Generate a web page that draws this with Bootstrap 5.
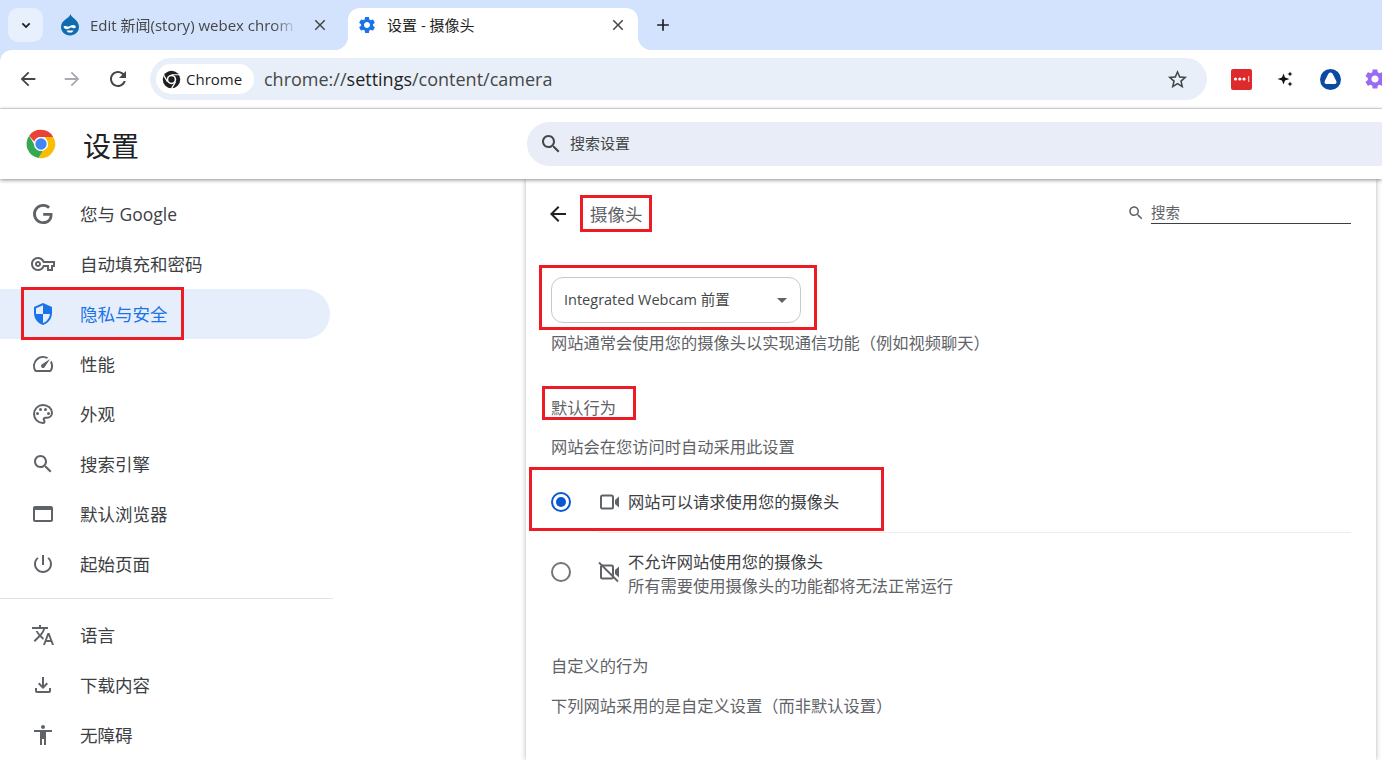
<!DOCTYPE html>
<html lang="zh-Hans">
<head>
  <meta charset="UTF-8" />
  <meta name="viewport" content="width=device-width, initial-scale=1.0" />
  <title>设置 - 摄像头</title>
  <link href="https://cdn.jsdelivr.net/npm/bootstrap@5.3.3/dist/css/bootstrap.min.css" rel="stylesheet" />
  <style>
    html, body { height: 760px; overflow: hidden; }
    body {
      font-family: "Open Sans", "Noto Sans CJK SC", sans-serif;
      background: #fff;
      color: #444746;
      position: relative;
    }
    svg { display: block; flex-shrink: 0; fill: currentColor; }

    .tabstrip { height: 50px; background: #d3e3fd; padding: 8px 0 0 8px; }
    .tab-menu { width: 35px; height: 34px; background: #e9f0fd; border-radius: 10px; color: #1f1f1f; flex-shrink: 0; }
    .tab-item { height: 42px; font-size: 15px; color: #444746; white-space: nowrap; padding-bottom: 8px; flex-shrink: 0; }
    .tab-off { width: 298px; padding-left: 17px; }
    .tab-off .tab-text { width: 208px; margin-left: 10px; -webkit-mask-image: linear-gradient(90deg, #000 88%, transparent); mask-image: linear-gradient(90deg, #000 88%, transparent); }
    .tab-off .tab-close { margin-right: 12px; }
    .tab-on { width: 290px; background: #fff; border-radius: 12px 12px 0 0; color: #1f1f1f; padding-left: 9px; margin-left: 7px; position: relative; }
    .tab-on .tab-text { width: 222px; margin-left: 10px; }
    .tab-on::before, .tab-on::after { content: ""; position: absolute; bottom: 0; width: 14px; height: 14px; }
    .tab-on::before { left: -14px; background: radial-gradient(circle at 0 0, #d3e3fd 14px, #fff 14.5px); }
    .tab-on::after { right: -14px; background: radial-gradient(circle at 100% 0, #d3e3fd 14px, #fff 14.5px); }
    .tab-close { color: #444746; }
    .tab-new { margin-left: 15px; color: #1f1f1f; height: 34px; }

    .toolbar-wrap { background: #d3e3fd; }
    .toolbar { height: 59px; background: #fff; border-bottom: 1px solid #e0e0e0; border-radius: 12px 0 0 0; padding-left: 17px; }
    .tool-btn { width: 44px; color: #444746; flex-shrink: 0; }
    .tool-btn.is-off { color: #a8abaf; }
    .tool-end { width: 45px; padding-left: 1px; }
    .omnibox { width: 1057px; height: 42px; flex-shrink: 0; background: #e9eff9; border-radius: 21px; padding: 0 18px 0 6px; }
    .chip { height: 30px; width: 98px; background: #fff; border-radius: 15px; font-size: 15px; color: #1f1f1f; padding-left: 6px; gap: 5px; }
    .url { font-size: 18px; color: #444746; margin-left: 10px; }
    .url b { font-weight: 400; color: #1f1f1f; }
    .ext-row { margin-left: 12px; flex-shrink: 0; }
    .ext-box { width: 44.500px; justify-content: center; }
    .ext-red { width: 21px; height: 21px; background: #dd2b2b; border-radius: 2px; }

    .set-head { height: 70px; background: #fff; box-shadow: 0 1px 4px rgba(0,0,0,.45); position: relative; z-index: 2; padding-left: 24px; }
    .set-title { font-size: 28px; color: #202124; margin-left: 25px; width: 444px; line-height: 1; padding-top: 3px; }
    .set-search { flex: 1; height: 44px; background: #e9edf7; border-radius: 22px 0 0 22px; color: #444746; padding-left: 12px; font-size: 15px; gap: 7px; }
    .set-search span { padding-bottom: 2px; }

    .set-body { height: 581px; overflow: hidden; }
    .side-nav { width: 526px; padding-top: 10px; flex-shrink: 0; }
    .side-row { height: 50px; width: 330px; padding-left: 31px; font-size: 17.5px; color: #3c4043; border-radius: 0 25px 25px 0; }
    .side-row svg { color: #5f6368; margin-right: 25px; }
    .side-row.is-on { background: #e6eefb; color: #1a73e8; }
    .side-row.is-on svg { color: #1a73e8; }
    .side-sep { width: 333px; height: 1px; background: #e3e3e3; margin: 9px 0 11px; }

    .panel { width: 850px; height: 100%; background: #fff; box-shadow: 0 0 5px rgba(0,0,0,.3); padding: 0 25px; color: #5f6368; font-size: 16.25px; flex-shrink: 0; }
    .panel-head { height: 70px; }
    .panel-back { color: #202124; margin-left: -5px; }
    .panel-title { font-size: 17.5px; margin-left: 20px; color: #5f6368; }
    .panel-find { margin-left: auto; margin-bottom: 4px; font-size: 14.5px; color: #5f6368; }
    .panel-find svg { margin-bottom: 2px; }
    .find-line { width: 200px; border-bottom: 1px solid #3c4043; line-height: 23px; margin-left: 6px; height: 23px; }
    .cam-select { width: 250px; height: 46px; margin-top: 28px; border: 1px solid #c8c8c8; border-radius: 12px; padding: 0 13px 0 12px; font-size: 14.5px; color: #444746; }
    .caret-down { width: 0; height: 0; border-left: 5px solid transparent; border-right: 5px solid transparent; border-top: 5px solid #5f6368; margin-left: auto; }
    .cam-note { margin-top: 8px; line-height: 24px; }
    .block-title { margin-top: 41px; line-height: 24px; }
    .block-title-low { margin-top: 44px; }
    .block-note { margin-top: 15px; line-height: 24px; }
    .block-note-low { margin-top: 16px; }
    .opt-row { height: 60px; }
    .opt-a { margin-top: 13px; }
    .opt-b { height: 78px; border-top: 1px solid #ececec; margin-left: 47px; }
    .opt-b-radio { margin-left: -47px; }
    .opt-radio { width: 20px; height: 20px; border-radius: 50%; border: 2px solid #757575; flex-shrink: 0; }
    .opt-radio.is-on { border-color: #0b57d0; padding: 3px; }
    .opt-radio.is-on i { display: block; width: 10px; height: 10px; border-radius: 50%; background: #0b57d0; }
    .opt-icon { margin-left: 27px; margin-right: 8px; color: #5f6368; }
    .opt-main { color: #3c4043; line-height: 24px; }
    .opt-sub { line-height: 24px; color: #5f6368; }
    .opt-lines { padding-top: 4px; }

    .mark-box { position: absolute; border: 3px solid #ed1c24; z-index: 5; pointer-events: none; }
  </style>
</head>
<body>
  <div class="tabstrip d-flex align-items-start">
    <div class="tab-menu d-flex align-items-center justify-content-center">
      <svg width="16" height="16" viewBox="0 0 24 24"><path d="M7.400 8.600 12 13.200l4.600-4.600L18.400 10.400 12 16.800 5.600 10.400z"/></svg>
    </div>
    <div class="tab-item tab-off d-flex align-items-center">
      <svg width="20" height="22" viewBox="0 0 20 22"><path fill="#0f6cb0" d="M10.500 0c.6 2.600 3 3.700 5 5.700 2 2 3.500 4.200 3.500 7.300 0 4.900-4 8.500-9 8.500s-9-3.700-9-8.500c0-3.700 2.300-6 4.700-7.700C7.200 4 9.800 2.800 10.500 0z"/><path fill="#fff" d="M4 12c2-.5 3.600 1.500 6 0 2-1.300 4-1.600 5.500 0 .8 1-.2 2.500-1.700 2.200-1.600-.3-2.800-1.200-3.800-.2-1.300 1.300-3.800 1.600-5.300.5C3.600 13.800 3.200 12.300 4 12z"/><path fill="#fff" d="M6.500 16.500h7l-1.500 2h-4z"/></svg>
      <div class="tab-text">Edit 新闻(story) webex chrom</div>
      <svg class="tab-close ms-auto" width="18" height="18" viewBox="0 0 24 24"><path d="M19 6.400 17.600 5 12 10.600 6.400 5 5 6.400 10.600 12 5 17.600 6.400 19 12 13.400 17.600 19 19 17.600 13.400 12z"/></svg>
    </div>
    <div class="tab-item tab-on d-flex align-items-center">
      <svg width="20" height="20" viewBox="0 0 24 24"><path fill="#1a73e8" d="M19.140 12.940c.04-.3.06-.61.06-.94 0-.32-.02-.64-.07-.94l2.030-1.580c.18-.14.23-.41.12-.61l-1.920-3.320c-.12-.22-.37-.29-.59-.22l-2.390.96c-.5-.38-1.030-.7-1.620-.94l-.36-2.540c-.04-.24-.24-.41-.48-.41h-3.840c-.24 0-.43.17-.47.41l-.36 2.540c-.59.24-1.130.57-1.620.94l-2.390-.96c-.22-.08-.47 0-.59.22L2.740 8.870c-.12.21-.08.47.12.61l2.030 1.580c-.05.3-.09.63-.09.94s.02.64.07.94l-2.030 1.580c-.18.14-.23.41-.12.61l1.920 3.320c.12.22.37.29.59.22l2.390-.96c.5.38 1.030.7 1.620.94l.36 2.540c.05.24.24.41.48.41h3.840c.24 0 .44-.17.47-.41l.36-2.540c.59-.24 1.130-.56 1.620-.94l2.390.96c.22.08.47 0 .59-.22l1.920-3.320c.12-.22.07-.47-.12-.61l-2.010-1.580zM12 15.600c-1.980 0-3.600-1.620-3.600-3.600s1.620-3.600 3.600-3.600 3.600 1.620 3.600 3.600-1.620 3.600-3.600 3.600z"/></svg>
      <div class="tab-text">设置 - 摄像头</div>
      <svg class="tab-close" width="18" height="18" viewBox="0 0 24 24"><path d="M19 6.400 17.600 5 12 10.600 6.400 5 5 6.400 10.600 12 5 17.600 6.400 19 12 13.400 17.600 19 19 17.600 13.400 12z"/></svg>
    </div>
    <div class="tab-new d-flex align-items-center">
      <svg width="20" height="20" viewBox="0 0 24 24"><path d="M19 13h-6v6h-2v-6H5v-2h6V5h2v6h6z"/></svg>
    </div>
  </div>

  <div class="toolbar-wrap">
    <div class="toolbar d-flex align-items-center">
      <div class="tool-btn"><svg width="22" height="22" viewBox="0 0 24 24"><path d="M20 11H7.830l5.590-5.590L12 4l-8 8 8 8 1.410-1.410L7.830 13H20v-2z"/></svg></div>
      <div class="tool-btn is-off"><svg width="22" height="22" viewBox="0 0 24 24"><path d="M4 11h12.170l-5.590-5.590L12 4l8 8-8 8-1.410-1.410L16.170 13H4v-2z"/></svg></div>
      <div class="tool-btn tool-end"><svg width="24" height="24" viewBox="0 0 24 24"><path d="M17.650 6.350C16.200 4.900 14.210 4 12 4c-4.420 0-7.990 3.580-7.990 8s3.570 8 7.990 8c3.730 0 6.840-2.550 7.730-6h-2.080c-.82 2.330-3.040 4-5.650 4-3.310 0-6-2.690-6-6s2.690-6 6-6c1.660 0 3.140.69 4.220 1.780L13 11h7V4l-2.350 2.350z"/></svg></div>
      <div class="omnibox d-flex align-items-center">
        <div class="chip d-flex align-items-center">
          <svg width="19" height="19" viewBox="0 0 24 24"><circle cx="12" cy="12" r="11" fill="#1f1f1f"/><circle cx="12" cy="12" r="6" fill="#fff"/><circle cx="12" cy="12" r="4" fill="#1f1f1f"/><path d="M12 6h10M7 15 2 6.500M17 15l-5 8.500" stroke="#fff" stroke-width="1.500" fill="none"/></svg>
          <span>Chrome</span>
        </div>
        <div class="url">chrome://<b>settings</b>/content/camera</div>
        <svg class="ms-auto" width="23" height="23" viewBox="0 0 24 24"><path d="M22 9.240l-7.190-.62L12 2 9.190 8.630 2 9.240l5.460 4.730L5.820 21 12 17.270 18.180 21l-1.630-7.030L22 9.240zM12 15.400l-3.760 2.270 1-4.280-3.320-2.880 4.380-.38L12 6.100l1.710 4.040 4.380.38-3.320 2.880 1 4.280L12 15.400z"/></svg>
      </div>
      <div class="ext-row d-flex align-items-center">
        <div class="ext-box d-flex">
          <div class="ext-red d-flex align-items-center justify-content-center">
            <svg width="17" height="6" viewBox="0 0 17 6"><circle cx="2.500" cy="3" r="1.600" fill="#fff"/><circle cx="6.800" cy="3" r="1.600" fill="#fff"/><circle cx="11" cy="3" r="1.600" fill="#fff"/><rect x="15" width="1.300" height="6" fill="#f4b5b5"/></svg>
          </div>
        </div>
        <div class="ext-box d-flex">
          <svg width="18" height="18" viewBox="0 0 18 18"><path fill="#111" d="M6.500 3.500 8 7.500 12.500 9 8 10.500 6.500 14.500 5 10.500 .5 9 5 7.500z"/><path fill="#111" d="M13 1.500l.8 1.700 1.700.8-1.700.8-.8 1.700-.8-1.700-1.700-.8 1.700-.8zM13 11.500l.8 1.700 1.700.8-1.700.8-.8 1.700-.8-1.700-1.700-.8 1.700-.8z"/></svg>
        </div>
        <div class="ext-box d-flex">
          <svg width="21" height="21" viewBox="0 0 21 21"><circle cx="10.500" cy="10.500" r="10.500" fill="#0b4aa2"/><path d="M10.500 3.500c1.500 0 2 1 3 3l2.500 5c1 2 .5 3.500-1.500 3.500h-8c-2 0-2.500-1.500-1.500-3.500l2.500-5c1-2 1.500-3 3-3z" fill="#fff"/></svg>
        </div>
        <div class="ext-box d-flex">
          <svg width="24" height="24" viewBox="0 0 24 24"><path fill="#9a6bf0" d="M19.140 12.940c.04-.3.06-.61.06-.94 0-.32-.02-.64-.07-.94l2.030-1.580c.18-.14.23-.41.12-.61l-1.920-3.320c-.12-.22-.37-.29-.59-.22l-2.390.96c-.5-.38-1.030-.7-1.620-.94l-.36-2.540c-.04-.24-.24-.41-.48-.41h-3.840c-.24 0-.43.17-.47.41l-.36 2.540c-.59.24-1.130.57-1.620.94l-2.390-.96c-.22-.08-.47 0-.59.22L2.740 8.870c-.12.21-.08.47.12.61l2.030 1.580c-.05.3-.09.63-.09.94s.02.64.07.94l-2.030 1.580c-.18.14-.23.41-.12.61l1.920 3.320c.12.22.37.29.59.22l2.390-.96c.5.38 1.030.7 1.620.94l.36 2.540c.05.24.24.41.48.41h3.840c.24 0 .44-.17.47-.41l.36-2.540c.59-.24 1.130-.56 1.620-.94l2.390.96c.22.08.47 0 .59-.22l1.920-3.320c.12-.22.07-.47-.12-.61l-2.010-1.580zM12 15.600c-1.980 0-3.600-1.620-3.600-3.600s1.620-3.600 3.600-3.600 3.600 1.620 3.600 3.600-1.620 3.600-3.600 3.600z"/></svg>
        </div>
      </div>
    </div>
  </div>

  <div class="set-head d-flex align-items-center">
    <svg width="34" height="34" viewBox="0 0 48 48">
      <path fill="#ea4335" d="M24 4a20 20 0 0 1 17.300 10H24a10 10 0 0 0-9.500 6.900L7.300 12.300A20 20 0 0 1 24 4z"/>
      <path fill="#34a853" d="M7.300 12.300 16 27a10 10 0 0 0 11 6.500L20.800 43.700A20 20 0 0 1 7.300 12.300z"/>
      <path fill="#fbbc04" d="M41.300 14a20 20 0 0 1-20.500 29.700L29 29a10 10 0 0 0-.2-15z"/>
      <circle cx="24" cy="24" r="10" fill="#fff"/>
      <circle cx="24" cy="24" r="8" fill="#4285f4"/>
    </svg>
    <div class="set-title">设置</div>
    <div class="set-search d-flex align-items-center">
      <svg width="24" height="24" viewBox="0 0 24 24"><path d="M15.500 14h-.79l-.28-.27C15.410 12.590 16 11.110 16 9.500 16 5.910 13.090 3 9.500 3S3 5.910 3 9.500 5.910 16 9.500 16c1.610 0 3.090-.59 4.230-1.570l.27.28v.79l5 4.990L20.490 19l-4.990-5zm-6 0C7.010 14 5 11.990 5 9.500S7.010 5 9.500 5 14 7.010 14 9.500 11.990 14 9.500 14z"/></svg>
      <span>搜索设置</span>
    </div>
  </div>

  <div class="set-body d-flex">
    <nav class="side-nav">
      <div class="side-row d-flex align-items-center"><svg width="24" height="24" viewBox="0 0 24 24"><path d="M21.350 11.100h-9.170v2.730h6.510c-.33 3.810-3.500 5.440-6.500 5.440C8.360 19.270 5 16.250 5 12c0-4.100 3.200-7.270 7.200-7.270 3.090 0 4.900 1.970 4.900 1.970L19 4.720S16.560 2 12.100 2C6.420 2 2.030 6.800 2.030 12c0 5.050 4.130 10 10.220 10 5.350 0 9.250-3.670 9.250-9.090 0-1.150-.15-1.810-.15-1.810z"/></svg>您与 Google</div>
      <div class="side-row d-flex align-items-center"><svg width="24" height="24" viewBox="0 0 24 24"><path d="M22 19h-6v-4h-2.680c-1.140 2.420-3.600 4-6.320 4-3.860 0-7-3.140-7-7s3.140-7 7-7c2.720 0 5.170 1.580 6.320 4H24v6h-2v4zm-4-2h2v-4h2v-2H11.940l-.23-.67C11.010 8.340 9.110 7 7 7c-2.760 0-5 2.240-5 5s2.240 5 5 5c2.110 0 4.010-1.340 4.710-3.330l.23-.67H18v4zM7 15c-1.650 0-3-1.350-3-3s1.350-3 3-3 3 1.350 3 3-1.350 3-3 3zm0-4c-.55 0-1 .45-1 1s.45 1 1 1 1-.45 1-1-.45-1-1-1z"/></svg>自动填充和密码</div>
      <div class="side-row is-on d-flex align-items-center"><svg width="24" height="24" viewBox="0 0 24 24"><path d="M12 1L3 5v6c0 5.550 3.840 10.740 9 12 5.160-1.260 9-6.450 9-12V5l-9-4zm0 10.990h7c-.53 4.120-3.280 7.790-7 8.940V12H5V6.300l7-3.110v8.800z"/></svg>隐私与安全</div>
      <div class="side-row d-flex align-items-center"><svg width="24" height="24" viewBox="0 0 24 24"><path d="M20.380 8.570l-1.230 1.850a8 8 0 0 1-.22 7.580H5.070A8 8 0 0 1 15.580 6.850l1.850-1.230A10 10 0 0 0 3.350 19a2 2 0 0 0 1.720 1h13.850a2 2 0 0 0 1.740-1 10 10 0 0 0-.27-10.440z"/><path d="M10.590 15.410a2 2 0 0 0 2.830 0l5.660-8.490-8.490 5.660a2 2 0 0 0 0 2.830z"/></svg>性能</div>
      <div class="side-row d-flex align-items-center"><svg width="24" height="24" viewBox="0 0 24 24"><path fill="none" stroke="currentColor" stroke-width="2" d="M12 3a9 9 0 0 0 0 18c.9 0 1.500-.7 1.500-1.500 0-.4-.2-.8-.4-1.100-.3-.4-.4-.7-.4-1.100 0-.9.700-1.600 1.600-1.600H16c2.800 0 5-2.200 5-5 0-4.200-4-7.700-9-7.700z"/><circle cx="6.500" cy="11.500" r="1.500"/><circle cx="9.500" cy="7.500" r="1.500"/><circle cx="14.500" cy="7.500" r="1.500"/><circle cx="17.500" cy="11.500" r="1.500"/></svg>外观</div>
      <div class="side-row d-flex align-items-center"><svg width="24" height="24" viewBox="0 0 24 24"><path d="M15.500 14h-.79l-.28-.27C15.410 12.590 16 11.110 16 9.500 16 5.910 13.090 3 9.500 3S3 5.910 3 9.500 5.910 16 9.500 16c1.610 0 3.090-.59 4.230-1.570l.27.28v.79l5 4.990L20.490 19l-4.990-5zm-6 0C7.010 14 5 11.990 5 9.500S7.010 5 9.500 5 14 7.010 14 9.500 11.990 14 9.500 14z"/></svg>搜索引擎</div>
      <div class="side-row d-flex align-items-center"><svg width="24" height="24" viewBox="0 0 24 24"><path d="M20 4H4c-1.110 0-2 .9-2 2v12c0 1.100.89 2 2 2h16c1.100 0 2-.9 2-2V6c0-1.100-.9-2-2-2zm0 14H4V8h16v10z"/></svg>默认浏览器</div>
      <div class="side-row d-flex align-items-center"><svg width="24" height="24" viewBox="0 0 24 24"><path d="M13 3h-2v10h2V3zm4.830 2.170l-1.420 1.420C17.990 7.860 19 9.810 19 12c0 3.870-3.130 7-7 7s-7-3.130-7-7c0-2.190 1.010-4.140 2.580-5.420L6.170 5.170C4.230 6.820 3 9.260 3 12c0 4.970 4.030 9 9 9s9-4.030 9-9c0-2.740-1.230-5.180-3.170-6.830z"/></svg>起始页面</div>
      <div class="side-sep"></div>
      <div class="side-row d-flex align-items-center"><svg width="24" height="24" viewBox="0 0 24 24"><path d="M12.870 15.070l-2.540-2.510.03-.03c1.740-1.940 2.980-4.170 3.710-6.530H17V4h-7V2H8v2H1v1.990h11.170C11.500 7.920 10.440 9.750 9 11.350 8.070 10.320 7.300 9.190 6.690 8h-2c.73 1.630 1.730 3.170 2.980 4.560l-5.090 5.020L4 19l5-5 3.110 3.110.76-2.040zM18.500 10h-2L12 22h2l1.120-3h4.750L21 22h2l-4.500-12zm-2.620 7l1.620-4.330L19.120 17h-3.240z"/></svg>语言</div>
      <div class="side-row d-flex align-items-center"><svg width="24" height="24" viewBox="0 0 24 24"><path d="M18 15v3H6v-3H4v3c0 1.100.9 2 2 2h12c1.100 0 2-.9 2-2v-3h-2zm-1-4l-1.410-1.410L13 12.170V4h-2v8.170L8.410 9.590 7 11l5 5 5-5z"/></svg>下载内容</div>
      <div class="side-row d-flex align-items-center"><svg width="24" height="24" viewBox="0 0 24 24"><path d="M12 2c1.100 0 2 .9 2 2s-.9 2-2 2-2-.9-2-2 .9-2 2-2zm9 7h-6v13h-2v-6h-2v6H9V9H3V7h18v2z"/></svg>无障碍</div>
    </nav>

    <main class="panel">
      <div class="panel-head d-flex align-items-center">
        <svg class="panel-back" width="24" height="24" viewBox="0 0 24 24"><path d="M20 11H7.830l5.590-5.590L12 4l-8 8 8 8 1.410-1.410L7.830 13H20v-2z"/></svg>
        <div class="panel-title">摄像头</div>
        <div class="panel-find d-flex align-items-end">
          <svg width="18" height="18" viewBox="0 0 24 24"><path d="M15.500 14h-.79l-.28-.27C15.410 12.590 16 11.110 16 9.500 16 5.910 13.090 3 9.500 3S3 5.910 3 9.500 5.910 16 9.500 16c1.610 0 3.090-.59 4.230-1.570l.27.28v.79l5 4.990L20.490 19l-4.990-5zm-6 0C7.010 14 5 11.990 5 9.500S7.010 5 9.500 5 14 7.010 14 9.500 11.990 14 9.500 14z"/></svg>
          <div class="find-line">搜索</div>
        </div>
      </div>
      <div class="cam-select d-flex align-items-center">
        <span>Integrated Webcam 前置</span>
        <span class="caret-down"></span>
      </div>
      <div class="cam-note">网站通常会使用您的摄像头以实现通信功能（例如视频聊天）</div>
      <div class="block-title">默认行为</div>
      <div class="block-note">网站会在您访问时自动采用此设置</div>
      <div class="opt-row opt-a d-flex align-items-center">
        <span class="opt-radio is-on"><i></i></span>
        <svg class="opt-icon" width="22" height="22" viewBox="0 0 22 22"><rect x="3" y="4.500" width="12" height="13" rx="1.500" fill="none" stroke="currentColor" stroke-width="2"/><path d="M17 9l4-3.500v11L17 13z"/></svg>
        <div class="opt-main">网站可以请求使用您的摄像头</div>
      </div>
      <div class="opt-row opt-b d-flex align-items-center">
        <span class="opt-radio opt-b-radio"></span>
        <svg class="opt-icon" width="22" height="22" viewBox="0 0 22 22"><rect x="3" y="4.500" width="12" height="13" rx="1.500" fill="none" stroke="currentColor" stroke-width="2"/><path d="M17 9l4-3.500v11L17 13z"/><path d="M1 1.500 20 20.500" fill="none" stroke="currentColor" stroke-width="1.800"/></svg>
        <div class="opt-lines">
          <div class="opt-main">不允许网站使用您的摄像头</div>
          <div class="opt-sub">所有需要使用摄像头的功能都将无法正常运行</div>
        </div>
      </div>
      <div class="block-title block-title-low">自定义的行为</div>
      <div class="block-note block-note-low">下列网站采用的是自定义设置（而非默认设置）</div>
    </main>
  </div>

  <!-- red annotation boxes drawn over the screenshot -->
  <div class="mark-box" style="left:21px;top:287px;width:163px;height:53px"></div>
  <div class="mark-box" style="left:580px;top:195px;width:72px;height:37px"></div>
  <div class="mark-box" style="left:539px;top:265px;width:278px;height:65px"></div>
  <div class="mark-box" style="left:542px;top:386px;width:94px;height:34px"></div>
  <div class="mark-box" style="left:529px;top:467px;width:355px;height:64px"></div>

  <script src="https://cdn.jsdelivr.net/npm/bootstrap@5.3.3/dist/js/bootstrap.bundle.min.js"></script>
</body>
</html>
